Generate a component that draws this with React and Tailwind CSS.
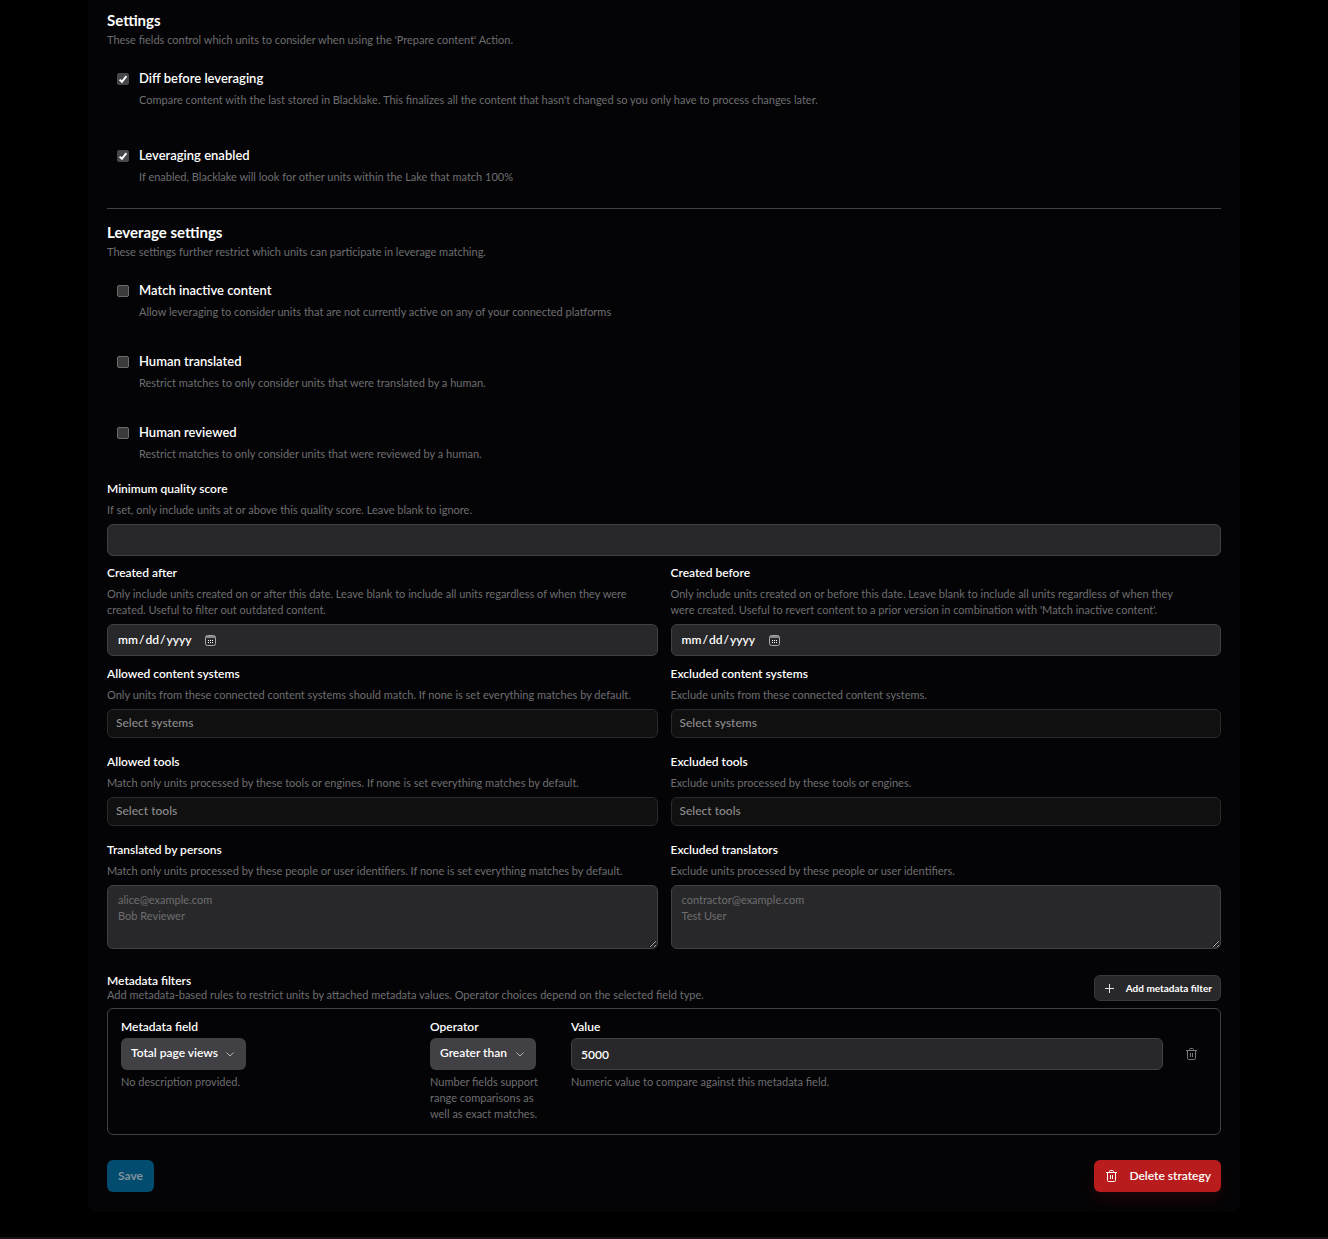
import { useState } from 'react';
import clsx from 'clsx';

const boxClass = 'block w-full rounded-md border border-[#414144] bg-[#28282a] text-white outline-none focus:border-[#6a6a70]';
const inputClass = 'h-8 px-[9px] text-xs font-semibold';
const areaClass = 'h-16 resize-y px-[10px] py-[6px] scheme-dark placeholder:text-[#6e6e70]';
const tagClass = 'block h-[29px] w-full rounded-md border border-[#2a2a2c] bg-[#101010] px-2 pb-[2px] text-xs font-medium text-white outline-none placeholder:text-[#8c8c8c]';

const TrashIcon = ({ className }) => (
  <svg viewBox="0 0 11 12" fill="none" stroke="currentColor" strokeWidth="1" className={className} aria-hidden="true">
    <path d="M0 2.5h11M3.5 2.5V1.5c0-.6.4-1 1-1h2c.6 0 1 .4 1 1v1M1.5 2.5v8c0 .6.4 1 1 1h6c.6 0 1-.4 1-1v-8M4.5 5v4M6.5 5v4" />
  </svg>
);

const CalendarIcon = ({ className }) => (
  <svg viewBox="0 0 11 11" fill="none" className={className} aria-hidden="true">
    <rect x="0.5" y="0.5" width="10" height="10" rx="2" stroke="#a8a8aa" />
    <path d="M1 2h9" stroke="#8a8a8c" strokeWidth="2" />
    <path d="M5 5h1v1H5zM7 5h1v1H7zM3 7h1v1H3zM5 7h1v1H5zM7 7h1v1H7zM3 5h1v1H3z" fill="#fff" />
  </svg>
);

const Heading = ({ title, text }) => (
  <div>
    <h2 className="text-[15px] leading-5 font-bold">{title}</h2>
    <p className="mt-[2px] text-[#6e6e70]">{text}</p>
  </div>
);

const CheckRow = ({ id, label, text, defaultChecked = false }) => (
  <div className="flex gap-[10px] pl-[10px]">
    <div className="relative mt-[5px] size-3 shrink-0">
      <input
        id={id}
        type="checkbox"
        defaultChecked={defaultChecked}
        className="peer block size-3 appearance-none rounded-[2px] border border-[#6b6b6b] bg-[#3b3b3b] checked:border-[#45474a] checked:bg-[#45474a]"
      />
      <svg viewBox="0 0 12 12" fill="none" className="pointer-events-none absolute inset-0 hidden size-3 peer-checked:block">
        <path d="M2.6 6.6 4.9 8.8 9.4 3.2" stroke="#fff" strokeWidth="2" />
      </svg>
    </div>
    <div>
      <label htmlFor={id} className="block text-[13px] leading-5 font-semibold">{label}</label>
      <p className="mt-1 text-[#6e6e70]">{text}</p>
    </div>
  </div>
);

const Field = ({ id, label, text, children }) => (
  <div>
    <label htmlFor={id} className="block text-xs leading-4 font-semibold">{label}</label>
    <p className="mt-[5px] mb-[6px] pr-6 text-[#6e6e70]">{text}</p>
    {children}
  </div>
);

const DateInput = ({ id }) => (
  <div className="relative">
    <input
      id={id}
      type="date"
      className={clsx(boxClass, inputClass, 'scheme-dark [&::-webkit-calendar-picker-indicator]:opacity-0')}
    />
    <CalendarIcon className="pointer-events-none absolute top-[11px] left-[98px] size-[11px]" />
  </div>
);

const Dropdown = ({ id, options, className }) => (
  <div className={clsx('relative', className)}>
    <select id={id} className="block h-8 w-full appearance-none rounded-md bg-[#414045] px-[10px] pb-[2px] text-xs font-semibold text-white outline-none">
      {options.map(o => <option key={o}>{o}</option>)}
    </select>
    <svg viewBox="0 0 8 5" fill="none" stroke="#b4b4b8" className="pointer-events-none absolute top-[14px] right-3 h-[5px] w-2" aria-hidden="true">
      <path d="M.5.5 4 4 7.5.5" />
    </svg>
  </div>
);

const App = () => {
  const [value, setValue] = useState('5000');

  return (
    <div className="flex min-h-screen flex-col justify-between bg-black font-['Lato',sans-serif] text-[11px] leading-4 text-white">
      <main className="mx-auto w-full max-w-6xl rounded-b-lg bg-[#040406] px-[19px] pt-[10px] pb-5">
        <Heading title="Settings" text="These fields control which units to consider when using the 'Prepare content' Action." />
        <div className="mt-5 space-y-[37px]">
          <CheckRow
            id="diff"
            label="Diff before leveraging"
            text="Compare content with the last stored in Blacklake. This finalizes all the content that hasn't changed so you only have to process changes later."
            defaultChecked
          />
          <CheckRow id="leverage" label="Leveraging enabled" text="If enabled, Blacklake will look for other units within the Lake that match 100%" defaultChecked />
        </div>
        <hr className="mt-[23px] mb-[13px] border-[#414144]" />

        <Heading title="Leverage settings" text="These settings further restrict which units can participate in leverage matching." />
        <div className="mt-5 space-y-[31px]">
          <CheckRow id="inactive" label="Match inactive content" text="Allow leveraging to consider units that are not currently active on any of your connected platforms" />
          <CheckRow id="translated" label="Human translated" text="Restrict matches to only consider units that were translated by a human." />
          <CheckRow id="reviewed" label="Human reviewed" text="Restrict matches to only consider units that were reviewed by a human." />
        </div>

        <div className="mt-[19px]">
          <Field id="score" label="Minimum quality score" text="If set, only include units at or above this quality score. Leave blank to ignore.">
            <input id="score" type="text" className={clsx(boxClass, inputClass)} />
          </Field>
        </div>

        <div className="mt-[9px] grid grid-cols-2 gap-x-[13px]">
          <Field id="after" label="Created after" text="Only include units created on or after this date. Leave blank to include all units regardless of when they were created. Useful to filter out outdated content.">
            <DateInput id="after" />
          </Field>
          <Field id="before" label="Created before" text="Only include units created on or before this date. Leave blank to include all units regardless of when they were created. Useful to revert content to a prior version in combination with 'Match inactive content'.">
            <DateInput id="before" />
          </Field>
        </div>

        <div className="mt-[10px] grid grid-cols-2 gap-x-[13px] gap-y-4">
          <Field id="allowed-systems" label="Allowed content systems" text="Only units from these connected content systems should match. If none is set everything matches by default.">
            <input id="allowed-systems" placeholder="Select systems" className={tagClass} />
          </Field>
          <Field id="excluded-systems" label="Excluded content systems" text="Exclude units from these connected content systems.">
            <input id="excluded-systems" placeholder="Select systems" className={tagClass} />
          </Field>
          <Field id="allowed-tools" label="Allowed tools" text="Match only units processed by these tools or engines. If none is set everything matches by default.">
            <input id="allowed-tools" placeholder="Select tools" className={tagClass} />
          </Field>
          <Field id="excluded-tools" label="Excluded tools" text="Exclude units processed by these tools or engines.">
            <input id="excluded-tools" placeholder="Select tools" className={tagClass} />
          </Field>
          <Field id="persons" label="Translated by persons" text="Match only units processed by these people or user identifiers. If none is set everything matches by default.">
            <textarea id="persons" placeholder={'alice@example.com\nBob Reviewer'} className={clsx(boxClass, areaClass)} />
          </Field>
          <Field id="excluded-persons" label="Excluded translators" text="Exclude units processed by these people or user identifiers.">
            <textarea id="excluded-persons" placeholder={'contractor@example.com\nTest User'} className={clsx(boxClass, areaClass)} />
          </Field>
        </div>

        <div className="mt-[25px] flex items-center justify-between">
          <div>
            <h3 className="text-xs leading-[14px] font-semibold">Metadata filters</h3>
            <p className="leading-[14px] text-[#6e6e70]">Add metadata-based rules to restrict units by attached metadata values. Operator choices depend on the selected field type.</p>
          </div>
          <button className="flex h-[26px] w-[127px] items-center justify-between rounded-md border border-[#38383a] bg-[#28282a] pr-2 pl-[10px] text-[10px] font-bold hover:bg-[#38383a]">
            <svg viewBox="0 0 9 9" stroke="#e4e4e6" className="size-[9px]" aria-hidden="true">
              <path d="M0 4.5h9M4.5 0v9" />
            </svg>
            Add metadata filter
          </button>
        </div>

        <div className="mt-[6px] grid grid-cols-[297fr_129fr_592fr_32px] gap-x-3 rounded-md border border-[#414144] px-[13px] pt-[10px] pb-3">
          <div>
            <label htmlFor="meta-field" className="mb-[3px] block text-xs leading-4 font-semibold">Metadata field</label>
            <Dropdown id="meta-field" options={['Total page views']} className="w-[125px]" />
            <p className="mt-1 text-[#6e6e70]">No description provided.</p>
          </div>
          <div>
            <label htmlFor="operator" className="mb-[3px] block text-xs leading-4 font-semibold">Operator</label>
            <Dropdown id="operator" options={['Greater than']} className="w-[106px]" />
            <p className="mt-1 pr-3 text-[#6e6e70]">Number fields support range comparisons as well as exact matches.</p>
          </div>
          <div>
            <label htmlFor="value" className="mb-[3px] block text-xs leading-4 font-semibold">Value</label>
            <input id="value" value={value} onChange={e => setValue(e.target.value)} className={clsx(boxClass, inputClass)} />
            <p className="mt-1 text-[#6e6e70]">Numeric value to compare against this metadata field.</p>
          </div>
          <button aria-label="Remove filter" className="mt-[19px] flex h-8 items-center justify-center text-[#77777a] hover:text-white">
            <TrashIcon className="h-3 w-[11px]" />
          </button>
        </div>

        <div className="mt-[25px] flex justify-between">
          <button className="h-8 w-[47px] rounded-md bg-[#024c70] text-xs font-bold text-[#83939b]">Save</button>
          <button className="flex h-8 w-[127px] items-center justify-between rounded-md bg-[#b91c1c] pr-[10px] pl-3 text-xs font-semibold shadow-[0_8px_16px_rgba(127,10,10,0.2)] hover:bg-[#dc2626]">
            <TrashIcon className="h-3 w-[11px]" />
            Delete strategy
          </button>
        </div>
      </main>
      <footer className="h-[2px] bg-[#161618]" />
    </div>
  );
};

export default App;
